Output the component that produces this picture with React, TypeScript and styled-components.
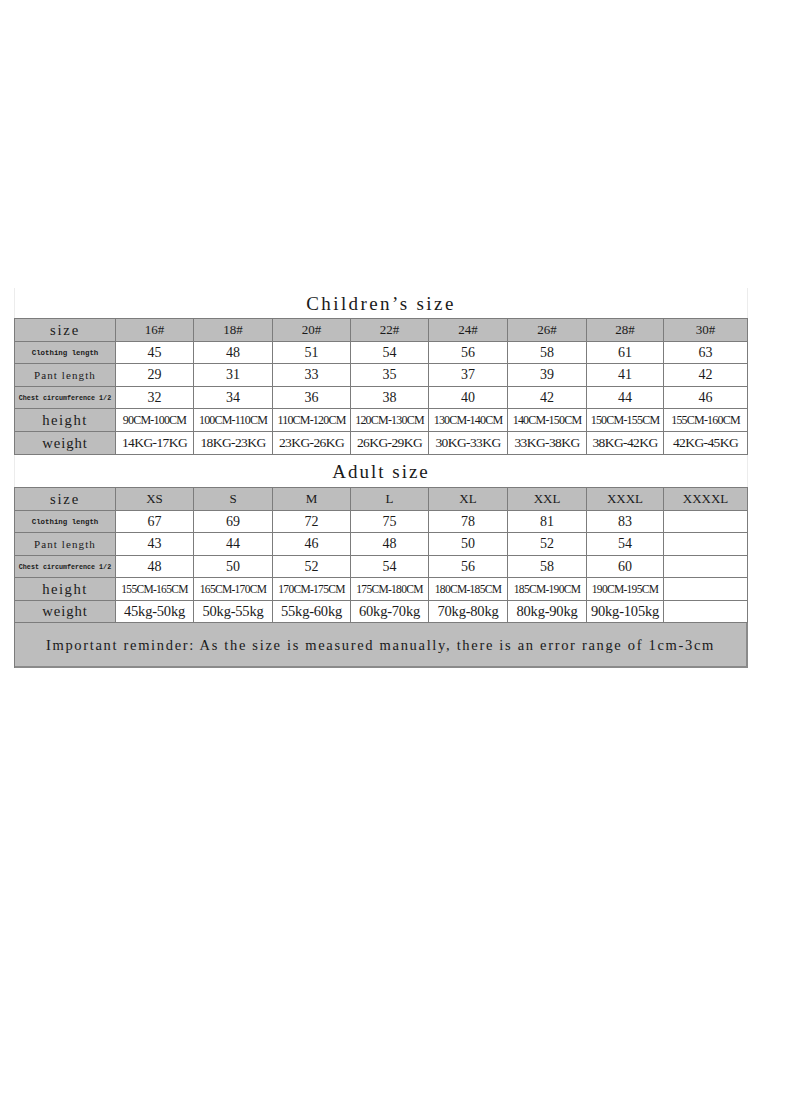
import styled, { createGlobalStyle } from "styled-components";

const GlobalStyle = createGlobalStyle`
    html, body {
        margin: 0;
        padding: 0;
        background: #ffffff;
    }
`;

const Page = styled.div`
    width: 800px;
    height: 1096px;
    padding: 288px 0 0 14px;
    box-sizing: border-box;
    color: #1a1a1a;
`;

const Sheet = styled.div`
    width: 734px;
    display: flex;
    flex-direction: column;
`;

const Title = styled.div<{ $h: number; $ls: number }>`
    height: ${(p) => p.$h}px;
    display: flex;
    align-items: center;
    justify-content: center;
    font-family: "Liberation Serif", "Times New Roman", serif;
    font-size: 19px;
    letter-spacing: ${(p) => p.$ls}px;
    border-left: 1px solid #ececec;
    border-right: 1px solid #ececec;
    box-sizing: border-box;
    padding-top: 2px;
`;

const Grid = styled.div<{ $rows: string }>`
    display: grid;
    grid-template-columns: 101px 78px 79px 78px 78px 79px 79px 77px 1fr;
    grid-template-rows: ${(p) => p.$rows};
    border-top: 1px solid #7c7c7c;
    border-left: 1px solid #7c7c7c;
`;

const Cell = styled.div<{ $gray?: boolean; $size: number; $ls?: number }>`
    display: flex;
    align-items: center;
    justify-content: center;
    border-right: 1px solid #7c7c7c;
    border-bottom: 1px solid #7c7c7c;
    background: ${(p) => (p.$gray ? "#bdbdbd" : "#ffffff")};
    font-family: "Liberation Serif", "Times New Roman", serif;
    font-size: ${(p) => p.$size}px;
    letter-spacing: ${(p) => p.$ls ?? 0}px;
    white-space: nowrap;
    overflow: hidden;
`;

const Label = styled(Cell)<{ $mono?: boolean }>`
    font-family: ${(p) =>
        p.$mono
            ? `"Liberation Mono", "DejaVu Sans Mono", monospace`
            : `"Liberation Serif", "Times New Roman", serif`};
    font-weight: ${(p) => (p.$mono ? 700 : 400)};
`;

const Reminder = styled.div`
    grid-column: 1 / -1;
    display: flex;
    align-items: center;
    justify-content: center;
    background: #bdbdbd;
    border-right: 2px solid #8a8a8a;
    border-bottom: 2px solid #8a8a8a;
    font-family: "Liberation Serif", "Times New Roman", serif;
    font-size: 14.5px;
    letter-spacing: 1.68px;
    white-space: nowrap;
    padding-top: 2px;
`;

type Row = {
    label: string;
    labelSize: number;
    labelLs?: number;
    mono?: boolean;
    size: number;
    ls?: number;
    gray?: boolean;
    values: string[];
};

const children: Row[] = [
    { label: "size", labelSize: 14.7, labelLs: 1.8, gray: true, size: 13, values: ["16#", "18#", "20#", "22#", "24#", "26#", "28#", "30#"] },
    { label: "Clothing length", labelSize: 7.4, mono: true, size: 14, values: ["45", "48", "51", "54", "56", "58", "61", "63"] },
    { label: "Pant length", labelSize: 11, labelLs: 1.1, size: 14, values: ["29", "31", "33", "35", "37", "39", "41", "42"] },
    { label: "Chest circumference 1/2", labelSize: 6.7, mono: true, size: 14, values: ["32", "34", "36", "38", "40", "42", "44", "46"] },
    { label: "height", labelSize: 14.7, labelLs: 1.5, size: 12, ls: -0.8, values: ["90CM-100CM", "100CM-110CM", "110CM-120CM", "120CM-130CM", "130CM-140CM", "140CM-150CM", "150CM-155CM", "155CM-160CM"] },
    { label: "weight", labelSize: 14.7, labelLs: 0.9, size: 13.5, ls: -0.6, values: ["14KG-17KG", "18KG-23KG", "23KG-26KG", "26KG-29KG", "30KG-33KG", "33KG-38KG", "38KG-42KG", "42KG-45KG"] },
];

const adults: Row[] = [
    { label: "size", labelSize: 14.7, labelLs: 1.8, gray: true, size: 13, values: ["XS", "S", "M", "L", "XL", "XXL", "XXXL", "XXXXL"] },
    { label: "Clothing length", labelSize: 7.4, mono: true, size: 14, values: ["67", "69", "72", "75", "78", "81", "83", ""] },
    { label: "Pant length", labelSize: 11, labelLs: 1.1, size: 14, values: ["43", "44", "46", "48", "50", "52", "54", ""] },
    { label: "Chest circumference 1/2", labelSize: 6.7, mono: true, size: 14, values: ["48", "50", "52", "54", "56", "58", "60", ""] },
    { label: "height", labelSize: 14.7, labelLs: 1.5, size: 11.5, ls: -0.7, values: ["155CM-165CM", "165CM-170CM", "170CM-175CM", "175CM-180CM", "180CM-185CM", "185CM-190CM", "190CM-195CM", ""] },
    { label: "weight", labelSize: 14.7, labelLs: 0.9, size: 14.5, ls: -0.2, values: ["45kg-50kg", "50kg-55kg", "55kg-60kg", "60kg-70kg", "70kg-80kg", "80kg-90kg", "90kg-105kg", ""] },
];

function Rows({ rows }: { rows: Row[] }) {
    return (
        <>
            {rows.map((row) => [
                <Label key={row.label} $gray $size={row.labelSize} $ls={row.labelLs} $mono={row.mono}>
                    {row.label}
                </Label>,
                ...row.values.map((v, i) => (
                    <Cell key={row.label + i} $gray={row.gray} $size={row.size} $ls={row.ls}>
                        {v}
                    </Cell>
                )),
            ])}
        </>
    );
}

export default function App() {
    return (
        <Page>
            <GlobalStyle />
            <Sheet>
                <Title $h={30} $ls={2.4}>Children’s size</Title>
                <Grid $rows="23px 22px 23px 22px 23px 23px">
                    <Rows rows={children} />
                </Grid>
                <Title $h={32} $ls={2}>Adult size</Title>
                <Grid $rows="23px 22px 23px 22px 23px 22px 45px">
                    <Rows rows={adults} />
                    <Reminder>
                        Important reminder: As the size is measured manually, there is an error range of 1cm-3cm
                    </Reminder>
                </Grid>
            </Sheet>
        </Page>
    );
}
